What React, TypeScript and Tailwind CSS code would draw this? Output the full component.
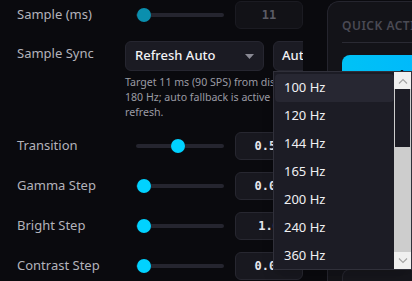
import React from 'react'

const FONT = { fontFamily: '"Noto Sans", "Open Sans", sans-serif' }
const MONO = { fontFamily: '"DejaVu Sans Mono", "Liberation Mono", monospace' }

function Slider({ pos, disabled }: { pos: number; disabled?: boolean }) {
  return (
    <div className="relative flex h-[14px] w-[88px] items-center">
      <div className="h-[4px] w-full rounded-full bg-[#25252f]" />
      <div
        className={`absolute top-0 h-[14px] w-[14px] rounded-full ${disabled ? 'bg-[#0a8fae]' : 'bg-[#00d2ff]'}`}
        style={{ left: pos }}
      />
    </div>
  )
}

function ValueBox({ value, disabled }: { value: string; disabled?: boolean }) {
  return (
    <div
      className={`flex h-[28px] w-[68px] shrink-0 items-center justify-center rounded-md border text-[12px] font-bold ${
        disabled
          ? 'border-[#1b1b22] bg-[#121217] text-[#5c5c66]'
          : 'border-[#272730] bg-[#18181f] text-[#e8e8ee]'
      }`}
      style={MONO}
    >
      {value}
    </div>
  )
}

function SliderRow({ label, pos, value, disabled }: { label: string; pos: number; value: string; disabled?: boolean }) {
  return (
    <div className="flex h-[28px] items-center">
      <div className="w-[108px] shrink-0 whitespace-nowrap text-[13px] text-[#b3b3bb]">{label}</div>
      <div className="flex w-[110px] shrink-0 justify-center">
        <Slider pos={pos} disabled={disabled} />
      </div>
      <ValueBox value={value} disabled={disabled} />
    </div>
  )
}

const RATES = ['100 Hz', '120 Hz', '144 Hz', '165 Hz', '200 Hz', '240 Hz', '360 Hz', '480 Hz']

function Chevron({ up }: { up?: boolean }) {
  return (
    <svg width="10" height="6" viewBox="0 0 10 6" fill="none">
      <path
        d={up ? 'M1 5.5 L5 1.5 L9 5.5' : 'M1 0.5 L5 4.5 L9 0.5'}
        stroke="#a3a3a3"
        strokeWidth="1.1"
      />
    </svg>
  )
}

export default function App() {
  return (
    <div className="relative flex h-[281px] w-[412px] overflow-hidden bg-[#0a0a0e]" style={FONT}>
      {/* settings column */}
      <div className="w-[303px] shrink-0 overflow-hidden pl-[17px] pt-[1px]">
        <div className="flex flex-col gap-[12px]">
          <SliderRow label="Sample (ms)" pos={1} value="11" disabled />

          <div className="flex flex-col">
            <div className="flex">
              <div className="w-[108px] shrink-0 whitespace-nowrap pt-[3px] text-[13px] text-[#b3b3bb]">Sample Sync</div>
              <div className="flex shrink-0 gap-[9px]">
                <div className="flex h-[30px] w-[139px] shrink-0 items-center justify-between rounded-md border border-[#262630] bg-[#1b1b23] pl-[9px] pr-[9px] text-[13px] font-medium text-[#f2f2f5]">
                  <span>Refresh Auto</span>
                  <svg width="9" height="5" viewBox="0 0 9 5">
                    <path d="M0 0 H9 L4.5 5 Z" fill="#8a8a94" />
                  </svg>
                </div>
                <div className="flex h-[30px] w-[100px] shrink-0 items-center rounded-md border border-[#262630] bg-[#1b1b23] pl-[8px] text-[13px] font-medium text-[#f2f2f5]">
                  Auto
                </div>
              </div>
            </div>
            <p className="ml-[108px] mt-[4px] w-[190px] shrink-0 text-[10.6px] leading-[15px] text-[#9b9ba4]">
              Target 11 ms (90 SPS) from display 180 Hz; auto fallback is active at low refresh.
            </p>
          </div>

          <SliderRow label="Transition" pos={35} value="0.50" />
          <SliderRow label="Gamma Step" pos={1} value="0.05" />
          <SliderRow label="Bright Step" pos={1} value="1.0" />
          <SliderRow label="Contrast Step" pos={1} value="0.05" />
        </div>
      </div>

      {/* quick actions panel */}
      <div className="ml-[24px] mt-[1px] min-w-0 flex-1 overflow-hidden rounded-tl-[12px] border-l border-t border-[#25252e] bg-[#131318] pl-[14px] pt-[15px]">
        <div className="whitespace-nowrap text-[12px] font-semibold tracking-[0.5px] text-[#4a4a54]">QUICK ACTIONS</div>
        <div className="mt-[7px] h-px bg-[#2a2a33]" />
        <div className="mt-[12px] flex h-[40px] w-[120px] items-center justify-center whitespace-nowrap rounded-lg bg-gradient-to-r from-[#00c2f5] to-[#00b4ff] pl-[22px] text-[13px] font-semibold text-[#0a0a0e]">
          Auto
        </div>
        <div className="mt-[174px] h-[20px] w-[120px] rounded-tl-lg border-l border-t border-[#25252e] bg-[#16161c]" />
      </div>

      {/* open refresh-rate dropdown */}
      <div className="absolute left-[273px] top-[71px] flex h-[199px] w-[139px] border border-[#30303a] bg-[#1c1c25] shadow-lg">
        <div className="flex-1 overflow-hidden pl-[1px] pt-[2px]">
          {RATES.map((r, i) => (
            <div
              key={r}
              className={`flex h-[28px] items-center rounded-sm pl-[9px] text-[13px] text-[#f0f0f3] ${i === 0 ? 'bg-[#272732]' : ''}`}
            >
              {r}
            </div>
          ))}
        </div>
        <div className="flex w-[17px] flex-col bg-[#cdcdcd]">
          <div className="flex h-[17px] items-center justify-center bg-[#f0f0f0]">
            <Chevron up />
          </div>
          <div className="mx-[1px] h-[58px] bg-[#1c1c25]" />
          <div className="flex-1" />
          <div className="flex h-[17px] items-center justify-center bg-[#f0f0f0]">
            <Chevron />
          </div>
        </div>
      </div>
    </div>
  )
}
